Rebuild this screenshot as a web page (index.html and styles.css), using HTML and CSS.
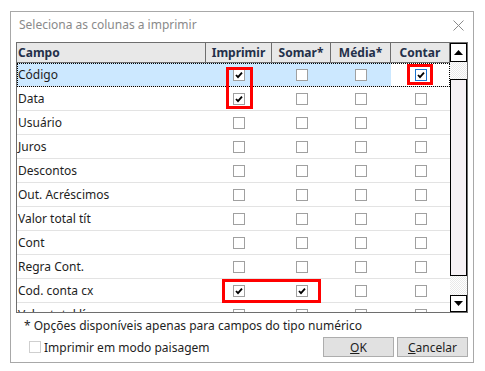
FILE: index.html
```html
<!DOCTYPE html>
<html lang="pt">
<head>
    <meta charset="UTF-8">
    <title>Seleciona as colunas a imprimir</title>
    <link rel="stylesheet" href="styles.css">
</head>
<body>
    <div class="dialog">
        <div class="titlebar">
            <span class="title">Seleciona as colunas a imprimir</span>
            <svg class="close" width="11" height="11" viewBox="0 0 11 11"><path d="M0.5 0.5 L10.5 10.5 M10.5 0.5 L0.5 10.5" stroke="#8a8a8a" stroke-width="1"/></svg>
        </div>

        <div class="grid">
            <div class="table">
                <div class="row head">
                    <div class="cell campo">Campo</div>
                    <div class="cell">Imprimir</div>
                    <div class="cell">Somar*</div>
                    <div class="cell">Média*</div>
                    <div class="cell">Contar</div>
                </div>

                <div class="row selected">
                    <div class="cell campo">Código</div>
                    <div class="cell"><span class="box"><svg viewBox="0 0 10 10"><path d="M2 5 L4 7.2 L8 2.6" /></svg></span></div>
                    <div class="cell"><span class="box"></span></div>
                    <div class="cell"><span class="box"></span></div>
                    <div class="cell focus"><span class="box"><svg viewBox="0 0 10 10"><path d="M2 5 L4 7.2 L8 2.6" /></svg></span></div>
                </div>
                <div class="row">
                    <div class="cell campo">Data</div>
                    <div class="cell"><span class="box"><svg viewBox="0 0 10 10"><path d="M2 5 L4 7.2 L8 2.6" /></svg></span></div>
                    <div class="cell"><span class="box"></span></div>
                    <div class="cell"><span class="box"></span></div>
                    <div class="cell"><span class="box"></span></div>
                </div>
                <div class="row">
                    <div class="cell campo">Usuário</div>
                    <div class="cell"><span class="box"></span></div>
                    <div class="cell"><span class="box"></span></div>
                    <div class="cell"><span class="box"></span></div>
                    <div class="cell"><span class="box"></span></div>
                </div>
                <div class="row">
                    <div class="cell campo">Juros</div>
                    <div class="cell"><span class="box"></span></div>
                    <div class="cell"><span class="box"></span></div>
                    <div class="cell"><span class="box"></span></div>
                    <div class="cell"><span class="box"></span></div>
                </div>
                <div class="row">
                    <div class="cell campo">Descontos</div>
                    <div class="cell"><span class="box"></span></div>
                    <div class="cell"><span class="box"></span></div>
                    <div class="cell"><span class="box"></span></div>
                    <div class="cell"><span class="box"></span></div>
                </div>
                <div class="row">
                    <div class="cell campo">Out. Acréscimos</div>
                    <div class="cell"><span class="box"></span></div>
                    <div class="cell"><span class="box"></span></div>
                    <div class="cell"><span class="box"></span></div>
                    <div class="cell"><span class="box"></span></div>
                </div>
                <div class="row">
                    <div class="cell campo">Valor total tít</div>
                    <div class="cell"><span class="box"></span></div>
                    <div class="cell"><span class="box"></span></div>
                    <div class="cell"><span class="box"></span></div>
                    <div class="cell"><span class="box"></span></div>
                </div>
                <div class="row">
                    <div class="cell campo">Cont</div>
                    <div class="cell"><span class="box"></span></div>
                    <div class="cell"><span class="box"></span></div>
                    <div class="cell"><span class="box"></span></div>
                    <div class="cell"><span class="box"></span></div>
                </div>
                <div class="row">
                    <div class="cell campo">Regra Cont.</div>
                    <div class="cell"><span class="box"></span></div>
                    <div class="cell"><span class="box"></span></div>
                    <div class="cell"><span class="box"></span></div>
                    <div class="cell"><span class="box"></span></div>
                </div>
                <div class="row">
                    <div class="cell campo">Cod. conta cx</div>
                    <div class="cell"><span class="box"><svg viewBox="0 0 10 10"><path d="M2 5 L4 7.2 L8 2.6" /></svg></span></div>
                    <div class="cell"><span class="box"><svg viewBox="0 0 10 10"><path d="M2 5 L4 7.2 L8 2.6" /></svg></span></div>
                    <div class="cell"><span class="box"></span></div>
                    <div class="cell"><span class="box"></span></div>
                </div>
                <div class="row">
                    <div class="cell campo">Valor total líq.</div>
                    <div class="cell"><span class="box"></span></div>
                    <div class="cell"><span class="box"></span></div>
                    <div class="cell"><span class="box"></span></div>
                    <div class="cell"><span class="box"></span></div>
                </div>
            </div>

            <div class="scrollbar">
                <div class="sb-btn up"><svg width="9" height="5" viewBox="0 0 9 5"><path d="M0 5 L4.5 0 L9 5 Z" fill="#000"/></svg></div>
                <div class="sb-track"><div class="sb-thumb"></div></div>
                <div class="sb-btn down"><svg width="9" height="5" viewBox="0 0 9 5"><path d="M0 0 L4.5 5 L9 0 Z" fill="#000"/></svg></div>
            </div>

            <!-- marcações em vermelho -->
            <div class="mark mark-imprimir"></div>
            <div class="mark mark-contar"></div>
            <div class="mark mark-conta"></div>
        </div>

        <p class="note">* Opções disponíveis apenas para campos do tipo numérico</p>

        <div class="footer">
            <label class="landscape"><span class="box disabled"></span>Imprimir em modo paisagem</label>
            <div class="buttons">
                <button class="button"><u>O</u>K</button>
                <button class="button"><u>C</u>ancelar</button>
            </div>
        </div>
    </div>
</body>
</html>
```

FILE: styles.css
```css
* {
    margin: 0;
    padding: 0;
    box-sizing: border-box;
    font-family: 'Noto Sans', 'Open Sans', sans-serif;
}

body {
    background: #fff;
    font-size: 12px;
    color: #1e1e1e;
}

.dialog {
    width: 464px;
    height: 352px;
    margin: 11px 0 0 10px;
    border: 1px solid #a8a8a8;
    padding: 0 5px 5px 5px;
}

.titlebar {
    height: 30px;
    display: flex;
    justify-content: space-between;
    padding: 5px 4px 0 3px;
}

.title {
    color: #8a8a8a;
    line-height: 16px;
}

.close {
    margin-top: 3px;
}

.grid {
    position: relative;
    display: flex;
    width: 452px;
    height: 271px;
    border: 1px solid #6e6e6e;
}

.table {
    width: 433px;
    overflow: hidden;
}

.row {
    display: grid;
    grid-template-columns: 189px 66px 59px 60px 59px;
    height: 24px;
    border-bottom: 1px solid #e3e3e3;
}

.cell {
    display: flex;
    align-items: center;
    justify-content: center;
    white-space: nowrap;
    overflow: hidden;
}

.cell.campo {
    justify-content: flex-start;
    padding-left: 1px;
}

.row.head {
    height: 20px;
    background: #e8e8e8;
    border-bottom: 1px solid #6e6e6e;
    font-weight: bold;
    color: #24304a;
}

.row.head .cell {
    border-right: 1px solid #6e6e6e;
}

.row.selected {
    outline: 1px dotted #000;
    outline-offset: -1px;
}

.row.selected .cell {
    background: #cce8ff;
}

.row.selected .cell.focus {
    background: #fff;
}

.box {
    display: inline-flex;
    width: 12px;
    height: 12px;
    border: 1px solid #a0a0a0;
    background: #fff;
}

.box svg {
    width: 10px;
    height: 10px;
    fill: none;
    stroke: #000;
    stroke-width: 1.8;
}

.focus .box {
    border-color: #1a73d0;
}

.box.disabled {
    border-color: #cfcfcf;
}

.scrollbar {
    width: 17px;
    display: flex;
    flex-direction: column;
    background: repeating-conic-gradient(#e9e9e9 0 25%, #fff 0 50%) 0 0 / 2px 2px;
}

.sb-btn {
    display: flex;
    align-items: center;
    justify-content: center;
    border: 1px solid #000;
    background: #fff;
}

.sb-btn.up {
    height: 19px;
}

.sb-btn.down {
    height: 17px;
}

.sb-track {
    flex: 1;
    padding-top: 17px;
}

.sb-thumb {
    height: 197px;
    border: 1px solid #000;
    background: #f6f1f5;
}

.mark {
    position: absolute;
    border: 3px solid #f00;
}

.mark-imprimir {
    left: 209px;
    top: 24px;
    width: 27px;
    height: 42px;
}

.mark-contar {
    left: 390px;
    top: 21px;
    width: 26px;
    height: 21px;
}

.mark-conta {
    left: 205px;
    top: 236px;
    width: 99px;
    height: 24px;
}

.note {
    margin: 5px 0 0 8px;
    line-height: 16px;
}

.footer {
    display: flex;
    justify-content: space-between;
    align-items: center;
    margin-top: 3px;
}

.landscape {
    display: flex;
    align-items: center;
    gap: 3px;
    margin-left: 13px;
}

.buttons {
    display: flex;
    gap: 3px;
}

.button {
    width: 71px;
    height: 20px;
    background: #e1e1e1;
    border: 1px solid #adadad;
    font-size: 12px;
    color: #1e1e1e;
}
```
